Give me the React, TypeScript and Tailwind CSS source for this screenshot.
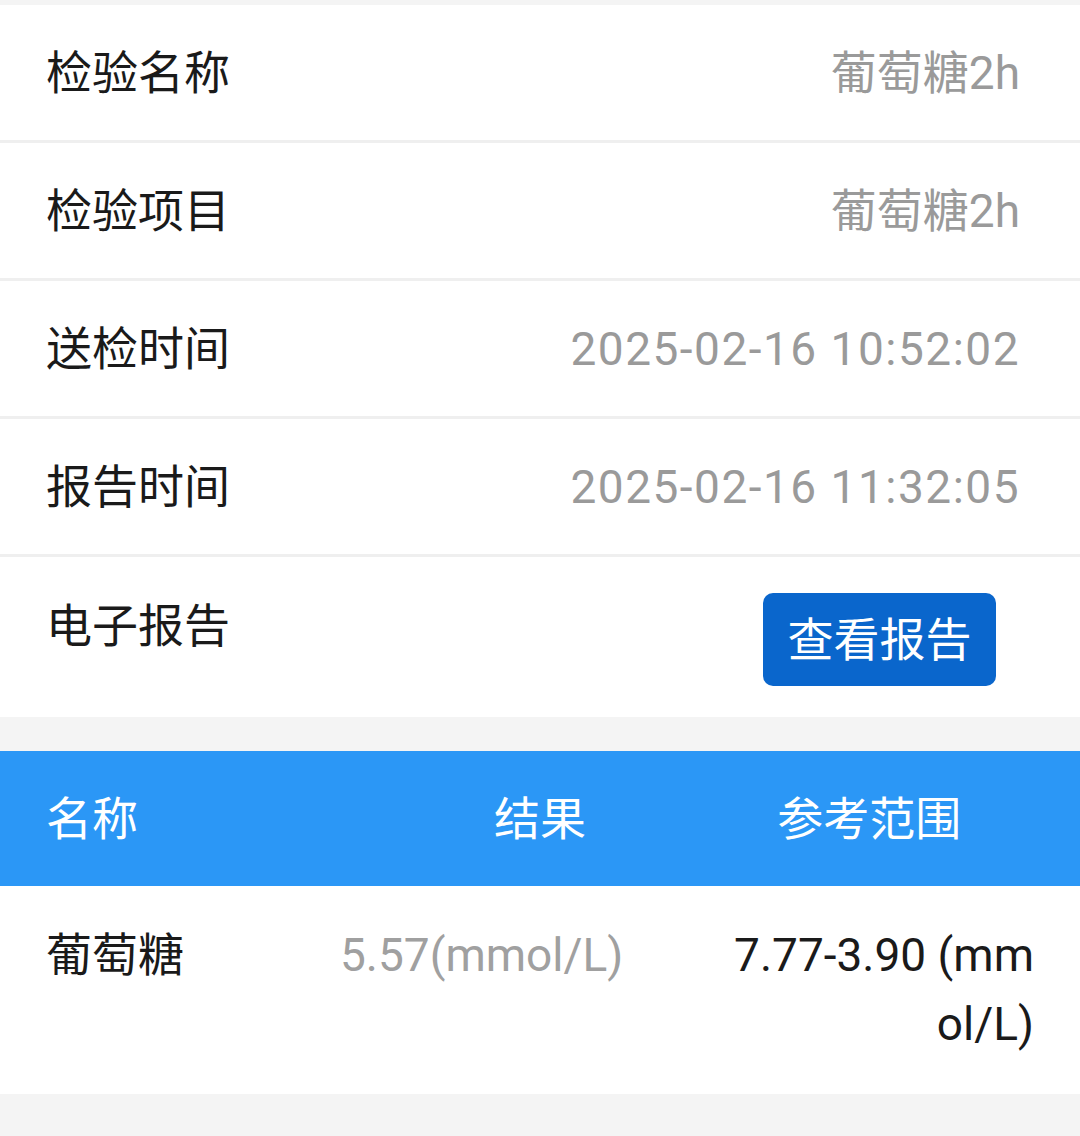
import React from 'react';

const rows = [
  { label: '检验名称', value: '葡萄糖2h', date: false },
  { label: '检验项目', value: '葡萄糖2h', date: false },
  { label: '送检时间', value: '2025-02-16 10:52:02', date: true },
  { label: '报告时间', value: '2025-02-16 11:32:05', date: true },
];

const App: React.FC = () => {
  return (
    <div className="w-[1080px] min-h-[1136px] bg-[#f4f4f4] pt-[5px] font-['Roboto','Noto_Sans_CJK_SC',sans-serif] text-[46px] leading-none">
      {/* info list */}
      <div className="bg-white">
        {rows.map((row) => (
          <div
            key={row.label}
            className="flex h-[138px] items-center justify-between border-b-[3px] border-[#efefef] pl-[46px] pr-[60px]"
          >
            <span className="text-[#1a1a1a]">{row.label}</span>
            <span className={`text-[#9a9a9a] ${row.date ? 'tracking-[1.5px]' : ''}`}>{row.value}</span>
          </div>
        ))}
        <div className="flex h-[160px] items-start justify-between pl-[46px] pr-[84px]">
          <span className="mt-[46px] text-[#1a1a1a]">电子报告</span>
          <button className="mt-[36px] flex h-[93px] w-[233px] items-center justify-center rounded-[10px] bg-[#0a66cc] text-white">
            查看报告
          </button>
        </div>
      </div>

      {/* result table */}
      <div className="mt-[34px]">
        <div className="grid h-[135px] grid-cols-3 items-center bg-[#2b97f6] px-[46px] text-white">
          <span>名称</span>
          <span className="text-center">结果</span>
          <span className="text-center">参考范围</span>
        </div>
        <div className="flex items-start bg-white py-[35px] pl-[46px] pr-[46px] leading-[69px]">
          <span className="w-[294px] shrink-0 text-[#1a1a1a]">葡萄糖</span>
          <span className="w-[374px] shrink-0 text-[#a0a0a0]">5.57(mmol/L)</span>
          <span className="min-w-0 flex-1 break-all text-right text-[#1a1a1a]">7.77-3.90 (mmol/L)</span>
        </div>
      </div>
    </div>
  );
};

export default App;
